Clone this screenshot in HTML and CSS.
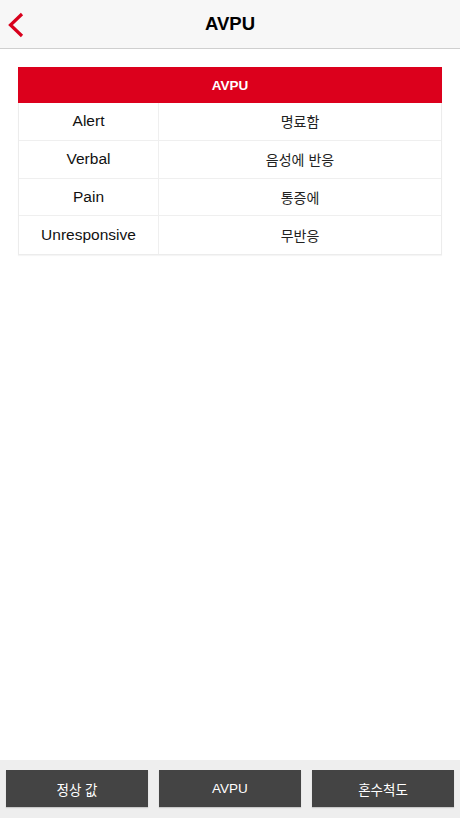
FILE: index.html
```html
<!DOCTYPE html>
<html lang="ko">
<head>
<meta charset="utf-8">
<title>AVPU</title>
<link rel="stylesheet" href="styles.css">
</head>
<body>
<div class="app">
  <header class="navbar">
    <button class="back" aria-label="뒤로">
      <svg width="18" height="26" viewBox="0 0 18 26"><path d="M15 2 L3.5 13 L15 24" fill="none" stroke="#d8001c" stroke-width="3.2" stroke-linecap="butt" stroke-linejoin="miter"/></svg>
    </button>
    <h1 class="title">AVPU</h1>
  </header>
  <main class="content">
    <div class="table">
      <div class="thead">AVPU</div>
      <div class="row"><div class="cell key">Alert</div><div class="cell val">명료함</div></div>
      <div class="row"><div class="cell key">Verbal</div><div class="cell val">음성에 반응</div></div>
      <div class="row"><div class="cell key">Pain</div><div class="cell val">통증에</div></div>
      <div class="row"><div class="cell key">Unresponsive</div><div class="cell val">무반응</div></div>
    </div>
  </main>
  <footer class="tabbar">
    <button class="tab">정상 값</button>
    <button class="tab">AVPU</button>
    <button class="tab">혼수척도</button>
  </footer>
</div>
</body>
</html>
```

FILE: styles.css
```css
* { box-sizing: border-box; }
html, body { margin: 0; padding: 0; background: #fff; }
body {
  font-family: "Liberation Sans", Arial, "Noto Sans CJK KR", sans-serif;
  color: #111;
}
.app {
  width: 460px;
  height: 818px;
  display: flex;
  flex-direction: column;
}
.navbar {
  height: 49px;
  flex: 0 0 49px;
  background: #f7f7f7;
  border-bottom: 1px solid #cfcfcf;
  position: relative;
  display: flex;
  align-items: center;
  justify-content: center;
}
.back {
  position: absolute;
  left: 7px;
  top: 12px;
  width: 18px;
  height: 26px;
  padding: 0;
  border: 0;
  background: none;
  display: flex;
}
.title {
  margin: 0;
  font-size: 18.5px;
  font-weight: bold;
  color: #000;
  letter-spacing: 0;
}
.content {
  flex: 1;
  padding: 18px 18px 0 18px;
}
.table {
  width: 424px;
  background: #fff;
  border: 1px solid #ececec;
  border-top: 0;
  box-shadow: 0 1px 1px rgba(0,0,0,0.04);
}
.thead {
  height: 36px;
  margin: 0 -1px;
  background: #dc001c;
  color: #fff;
  font-weight: bold;
  font-size: 13.5px;
  display: flex;
  align-items: center;
  justify-content: center;
}
.row {
  display: grid;
  grid-template-columns: 140px 1fr;
  height: 37.75px;
  border-bottom: 1px solid #efefef;
}
.row:last-child { border-bottom: 0; }
.cell {
  display: flex;
  align-items: center;
  justify-content: center;
  font-size: 15.5px;
  color: #111;
}
.key { border-right: 1px solid #efefef; }
.val {
  font-family: "Noto Sans CJK KR", sans-serif;
  font-size: 14px;
  color: #222;
}
.tabbar {
  flex: 0 0 58px;
  background: #eeeeee;
  display: grid;
  grid-template-columns: repeat(3, 142px);
  column-gap: 11px;
  padding: 10px 6px 11px 6px;
}
.tab {
  height: 37px;
  border: 0;
  border-radius: 0;
  background: #444444;
  color: #fff;
  font-family: "Liberation Sans", Arial, "Noto Sans CJK KR", sans-serif;
  font-size: 13.5px;
  padding: 0;
  box-shadow: 0 1px 1px rgba(0,0,0,0.15);
}
```
